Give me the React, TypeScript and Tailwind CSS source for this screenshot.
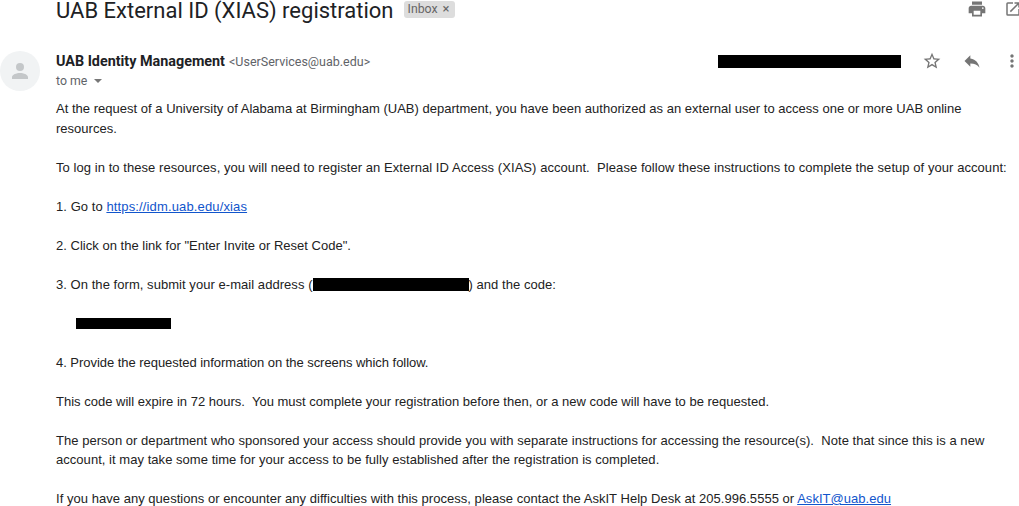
const icons = {
  print:
    "M19 8H5c-1.66 0-3 1.34-3 3v6h4v4h12v-4h4v-6c0-1.66-1.34-3-3-3zm-3 11H8v-5h8v5zm3-7c-.55 0-1-.45-1-1s.45-1 1-1 1 .45 1 1-.45 1-1 1zm-1-9H6v4h12V3z",
  open: "M19 19H5V5h7V3H5a2 2 0 0 0-2 2v14a2 2 0 0 0 2 2h14c1.1 0 2-.9 2-2v-7h-2v7zM14 3v2h3.59l-9.83 9.83 1.41 1.41L19 6.41V10h2V3h-7z",
  star: "M22 9.24l-7.19-.62L12 2 9.19 8.63 2 9.24l5.46 4.73L5.82 21 12 17.27 18.18 21l-1.63-7.03L22 9.24zM12 15.4l-3.76 2.27 1-4.28-3.32-2.88 4.38-.38L12 6.1l1.71 4.04 4.38.38-3.32 2.88 1 4.28L12 15.4z",
  reply: "M10 9V5l-7 7 7 7v-4.1c5 0 8.5 1.6 11 5.1-1-5-4-10-11-11z",
  more: "M12 8c1.1 0 2-.9 2-2s-.9-2-2-2-2 .9-2 2 .9 2 2 2zm0 2c-1.1 0-2 .9-2 2s.9 2 2 2 2-.9 2-2-.9-2-2-2zm0 6c-1.1 0-2 .9-2 2s.9 2 2 2 2-.9 2-2-.9-2-2-2z",
};

function Icon({ d, className }: { d: string; className: string }) {
  return (
    <svg viewBox="0 0 24 24" className={className} fill="currentColor">
      <path d={d} />
    </svg>
  );
}

function Avatar() {
  return (
    <div className="flex h-10 w-10 shrink-0 items-center justify-center rounded-full bg-[#f1f3f4]">
      <svg viewBox="0 0 24 24" className="h-6 w-6 text-[#c4c7c9]" fill="currentColor">
        <circle cx="12" cy="8" r="4" />
        <path d="M12 14c-3.5 0-8 1.6-8 4.2V20h16v-1.8c0-2.6-4.5-4.2-8-4.2z" />
      </svg>
    </div>
  );
}

export default function App() {
  return (
    <div className="h-[506px] w-[1019px] overflow-hidden bg-white font-['Liberation_Sans',Arial,sans-serif] text-[#222222]">
      {/* Subject */}
      <div className="flex h-[21px] items-center pl-[56px]">
        <h1 className="font-['Roboto',sans-serif] text-[22px] leading-[21px] whitespace-nowrap text-[#202124]">
          UAB External ID (XIAS) registration
        </h1>
        <span className="mt-[-3px] ml-[10px] flex h-[17px] w-[51px] items-center gap-[5px] rounded-[3px] bg-[#dddddd] pl-1 font-['Roboto',sans-serif] text-[12.3px] text-[#666666]">
          Inbox <span className="text-[13px]">×</span>
        </span>
        <div className="mt-[-3px] mr-[-3px] ml-auto flex items-center gap-[17px] text-[#757575]">
          <Icon d={icons.print} className="h-5 w-5" />
          <Icon d={icons.open} className="h-[18px] w-[18px]" />
        </div>
      </div>

      {/* Sender */}
      <div className="mt-[30px] flex h-[48px]">
        <Avatar />
        <div className="ml-4 font-['Roboto',sans-serif]">
          <div className="flex items-baseline gap-1 leading-[22px]">
            <span className="text-[14.35px] font-bold text-[#202124]">UAB Identity Management</span>
            <span className="text-[12.5px] text-[#5f6368]">{"<UserServices@uab.edu>"}</span>
          </div>
          <div className="flex items-center gap-[7px] text-[12.3px] leading-[16px] text-[#5f6368]">
            to me
            <span className="h-0 w-0 border-x-[4px] border-t-[4px] border-x-transparent border-t-[#777777]" />
          </div>
        </div>
        <div className="mr-[-3px] ml-auto flex h-[20px] items-start text-[#757575]">
          <div className="mt-[4px] mr-[21px] h-[13px] w-[183px] bg-black" />
          <Icon d={icons.star} className="mr-[20px] h-5 w-5" />
          <Icon d={icons.reply} className="mr-[20px] h-5 w-5" />
          <Icon d={icons.more} className="h-5 w-5" />
        </div>
      </div>

      {/* Message body */}
      <div className="w-[1012px] pl-[56px] text-[13px] leading-[19.5px]">
        <p className="tracking-[0.015px]">
          At the request of a University of Alabama at Birmingham (UAB) department, you have been authorized as an
          external user to access one or more UAB online resources.
        </p>
        <br />
        <p className="tracking-[0.06px]">
          To log in to these resources, you will need to register an External ID Access (XIAS) account.&nbsp; Please
          follow these instructions to complete the setup of your account:
        </p>
        <br />
        <p className="tracking-[0.06px]">
          1. Go to{" "}
          <a href="#" className="tracking-[0.14px] text-[#1155cc] underline">
            https://idm.uab.edu/xias
          </a>
        </p>
        <br />
        <p className="tracking-[0.02px]">2. Click on the link for "Enter Invite or Reset Code".</p>
        <br />
        <p className="tracking-[0.05px]">
          3. On the form, submit your e-mail address (
          <span className="inline-block h-[13px] w-[156px] bg-black align-[-2px]" />) and the code:
        </p>
        <br />
        <p className="flex h-[19.5px] items-center pl-[20px]">
          <span className="h-[11px] w-[95px] bg-black" />
        </p>
        <br />
        <p className="tracking-[-0.04px]">4. Provide the requested information on the screens which follow.</p>
        <br />
        <p className="tracking-[0.01px]">
          This code will expire in 72 hours.&nbsp; You must complete your registration before then, or a new code will
          have to be requested.
        </p>
        <br />
        <p className="tracking-[0.04px]">
          The person or department who sponsored your access should provide you with separate instructions for accessing
          the resource(s).&nbsp; Note that since this is a new account, it may take some time for your access to be
          fully established after the registration is completed.
        </p>
        <br />
        <p className="tracking-[0.035px]">
          If you have any questions or encounter any difficulties with this process, please contact the AskIT Help Desk
          at 205.996.5555 or{" "}
          <a href="#" className="text-[#1155cc] underline">
            AskIT@uab.edu
          </a>
        </p>
      </div>
    </div>
  );
}
